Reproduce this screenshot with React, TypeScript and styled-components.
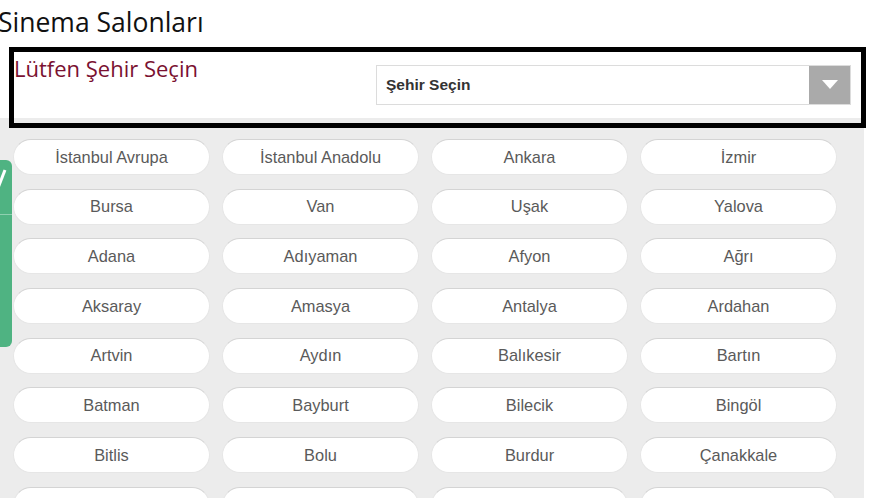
import styled, { createGlobalStyle } from "styled-components";

const cities = [
  "İstanbul Avrupa", "İstanbul Anadolu", "Ankara", "İzmir",
  "Bursa", "Van", "Uşak", "Yalova",
  "Adana", "Adıyaman", "Afyon", "Ağrı",
  "Aksaray", "Amasya", "Antalya", "Ardahan",
  "Artvin", "Aydın", "Balıkesir", "Bartın",
  "Batman", "Bayburt", "Bilecik", "Bingöl",
  "Bitlis", "Bolu", "Burdur", "Çanakkale",
  "Çankırı", "Çorum", "Denizli", "Diyarbakır",
];

const GlobalStyle = createGlobalStyle`
  html, body {
    margin: 0;
    padding: 0;
    background: #fff;
    overflow: hidden;
  }
  * { box-sizing: border-box; }
`;

function App() {
  return (
    <Page>
      <GlobalStyle />
      <Title>Sinema Salonları</Title>
      <SelectBox>
        <SelectInner>
          <Label>Lütfen Şehir Seçin</Label>
          <Select>
            <SelectText>Şehir Seçin</SelectText>
            <ArrowButton>
              <svg width="16" height="10" viewBox="0 0 16 10">
                <polygon points="0,0 16,0 8,9" fill="#fff" />
              </svg>
            </ArrowButton>
          </Select>
        </SelectInner>
      </SelectBox>
      <Panel>
        <CityGrid>
          {cities.map((city) => (
            <CityPill key={city}>{city}</CityPill>
          ))}
        </CityGrid>
      </Panel>
      <SideTab>
        <svg width="12" height="30" viewBox="0 0 12 30">
          <path d="M-2 26 L5 8" stroke="#fff" strokeWidth="3" fill="none" />
        </svg>
        <TabLine />
      </SideTab>
    </Page>
  );
}

export default App;

const Page = styled.div`
  position: relative;
  width: 872px;
  height: 498px;
  overflow: hidden;
`;

const Title = styled.h1`
  margin: 0 0 0 -2px;
  height: 47px;
  padding-top: 4px;
  font-family: "Open Sans", sans-serif;
  font-weight: 400;
  font-size: 26.5px;
  line-height: 36px;
  color: #111;
`;

const SelectBox = styled.div`
  position: relative;
  z-index: 1;
  width: 857px;
  height: 81px;
  margin: 0 0 -10px 9px;
  border: 5px solid #000;
`;

const SelectInner = styled.div`
  height: 65px;
  background: #fff;
  display: flex;
  justify-content: space-between;
  padding: 0 10px 0 0;
`;

const Label = styled.div`
  font-family: "Open Sans", sans-serif;
  font-size: 22px;
  color: #7a1131;
  line-height: 30px;
  padding-top: 1px;
`;

const Select = styled.div`
  width: 475px;
  height: 40px;
  margin-top: 13px;
  border: 1px solid #dcdcdc;
  display: flex;
  align-items: center;
  justify-content: space-between;
`;

const SelectText = styled.span`
  font-family: "Liberation Sans", Arial, sans-serif;
  font-weight: 700;
  font-size: 15.5px;
  color: #333;
  padding-left: 9px;
`;

const ArrowButton = styled.div`
  width: 41px;
  height: 38px;
  background: #aaaaaa;
  display: flex;
  align-items: center;
  justify-content: center;
`;

const Panel = styled.div`
  width: 864px;
  height: 400px;
  background: #ececec;
  padding: 21px 0 0 13px;
`;

const CityGrid = styled.div`
  display: grid;
  grid-template-columns: repeat(4, 197px);
  column-gap: 12px;
  row-gap: 13.7px;
`;

const CityPill = styled.div`
  height: 36px;
  border-radius: 18px;
  background: #fff;
  border: 1px solid #e6e6e6;
  border-top-color: #d4d4d4;
  display: flex;
  align-items: center;
  justify-content: center;
  font-family: "Liberation Sans", Arial, sans-serif;
  font-size: 16.4px;
  color: #5a5a5a;
`;

const SideTab = styled.div`
  position: absolute;
  left: 0;
  top: 160px;
  width: 12px;
  height: 187px;
  background: #4fb382;
  border-radius: 0 6px 6px 0;
  z-index: 2;
  overflow: hidden;
  padding-top: 2px;
`;

const TabLine = styled.div`
  margin-top: 18px;
  height: 1px;
  background: #8fd0b0;
`;
